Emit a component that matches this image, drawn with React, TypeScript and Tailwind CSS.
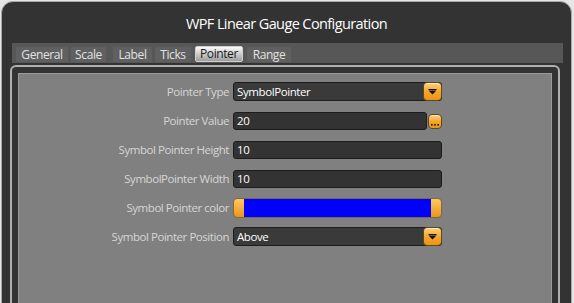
import React from "react";

const tabs = [
  { name: "General", cls: "w-[52px] mr-[3px]" },
  { name: "Scale", cls: "w-[35px] mr-[7px]" },
  { name: "Label", cls: "w-[39px] mr-[3px]" },
  { name: "Ticks", cls: "w-[36px] mr-[4px]" },
  { name: "Pointer", cls: "w-[48px] mr-[4px]" },
  { name: "Range", cls: "w-[44px] mr-[4px]" },
];

const Arrow: React.FC = () => (
  <svg width="9" height="6" viewBox="0 0 9 6">
    <rect x="0.5" y="0" width="8" height="1" fill="#111" />
    <path d="M0.5 1.5 H8.5 L4.5 5.5 Z" fill="#111" />
  </svg>
);

const OrangeButton: React.FC<{ className?: string; children?: React.ReactNode }> = ({ className, children }) => (
  <div
    className={`flex items-center justify-center rounded-[4px] border border-[#5a4a22] bg-gradient-to-b from-[#fdd27a] via-[#f5a62a] to-[#ec9414] shadow-[inset_0_1px_0_rgba(255,255,255,0.5)] ${className ?? ""}`}
  >
    {children}
  </div>
);

const Dropdown: React.FC<{ value: string }> = ({ value }) => (
  <div className="relative flex h-[19px] w-[209px] items-center rounded-[3px] border border-[#1c1c1c] bg-[#3a3a3a] pl-[3px] text-[11.5px] tracking-[-0.4px] text-white">
    {value}
    <OrangeButton className="absolute right-[-1px] top-[-1px] h-[19px] w-[19px]">
      <Arrow />
    </OrangeButton>
  </div>
);

const TextBox: React.FC<{ value: string; className?: string }> = ({ value, className }) => (
  <div className={`flex h-[18px] items-center rounded-[3px] border border-[#1c1c1c] bg-[#333] pl-[3px] text-[11.5px] tracking-[-0.4px] text-white ${className ?? "w-[209px]"}`}>
    {value}
  </div>
);

const Row: React.FC<{ label: string; children: React.ReactNode }> = ({ label, children }) => (
  <div className="flex h-[29px] items-center">
    <div className="w-[214px] pr-[4px] text-right text-[11.5px] tracking-[-0.45px] text-[#d6d6d6]">{label}</div>
    {children}
  </div>
);

const App: React.FC = () => {
  return (
    <div className="h-[303px] w-[574px] overflow-hidden bg-[#e6e6e6] font-['Open_Sans',sans-serif]">
      <div className="ml-[1px] mt-[1px] flex h-[320px] w-[571px] flex-col rounded-t-[12px] border border-[#a9a9a9] bg-[#333333]">
        <div className="flex h-[41px] items-center justify-center pt-[2px] text-[14.5px] tracking-[-0.6px] text-white">
          WPF Linear Gauge Configuration
        </div>

        <div className="ml-[10px] flex h-[20px] w-[551px] items-end bg-[#575757] pb-[1px] pl-[4px]">
          {tabs.map((t) =>
            t.name === "Pointer" ? (
              <div
                key={t.name}
                className={`flex h-[16px] items-center justify-center rounded-[2px] border border-[#d0d0d0] bg-gradient-to-b from-[#fbfbfb] to-[#9d9d9d] text-[12px] tracking-[-0.4px] text-[#1a1a1a] ${t.cls}`}
              >
                {t.name}
              </div>
            ) : (
              <div
                key={t.name}
                className={`flex h-[15px] items-center justify-center bg-[#606060] text-[12px] tracking-[-0.4px] text-[#e2e2e2] ${t.cls}`}
              >
                {t.name}
              </div>
            )
          )}
        </div>

        <div className="ml-[8px] mt-[2px] w-[550px] flex-1 rounded-t-[6px] border-2 border-b-0 border-[#b0b0b0] bg-[#333333] px-[6px] pt-[6px]">
          <div className="h-full border border-b-0 border-[#9a9a9a] bg-[#808080] pt-[3px]">
            <Row label="Pointer Type">
              <Dropdown value="SymbolPointer" />
            </Row>
            <Row label="Pointer Value">
              <div className="flex items-center">
                <TextBox value="20" className="w-[194px]" />
                <OrangeButton className="ml-[1px] mt-[1px] h-[15px] w-[14px] items-end pb-[2px]">
                  <svg width="8" height="2" viewBox="0 0 8 2">
                    <rect x="0" y="0" width="1.6" height="1.6" fill="#111" />
                    <rect x="3.2" y="0" width="1.6" height="1.6" fill="#111" />
                    <rect x="6.4" y="0" width="1.6" height="1.6" fill="#111" />
                  </svg>
                </OrangeButton>
              </div>
            </Row>
            <Row label="Symbol Pointer Height">
              <TextBox value="10" />
            </Row>
            <Row label="SymbolPointer Width">
              <TextBox value="10" />
            </Row>
            <Row label="Symbol Pointer color">
              <div className="flex h-[20px] w-[209px] rounded-[4px] border border-[#7d6a3a] bg-gradient-to-b from-[#fcc860] to-[#ec9414]">
                <div className="ml-[10px] mr-[10px] h-full flex-1 bg-[#0000ff]" />
              </div>
            </Row>
            <Row label="Symbol Pointer Position">
              <Dropdown value="Above" />
            </Row>
          </div>
        </div>
      </div>
    </div>
  );
};

export default App;
